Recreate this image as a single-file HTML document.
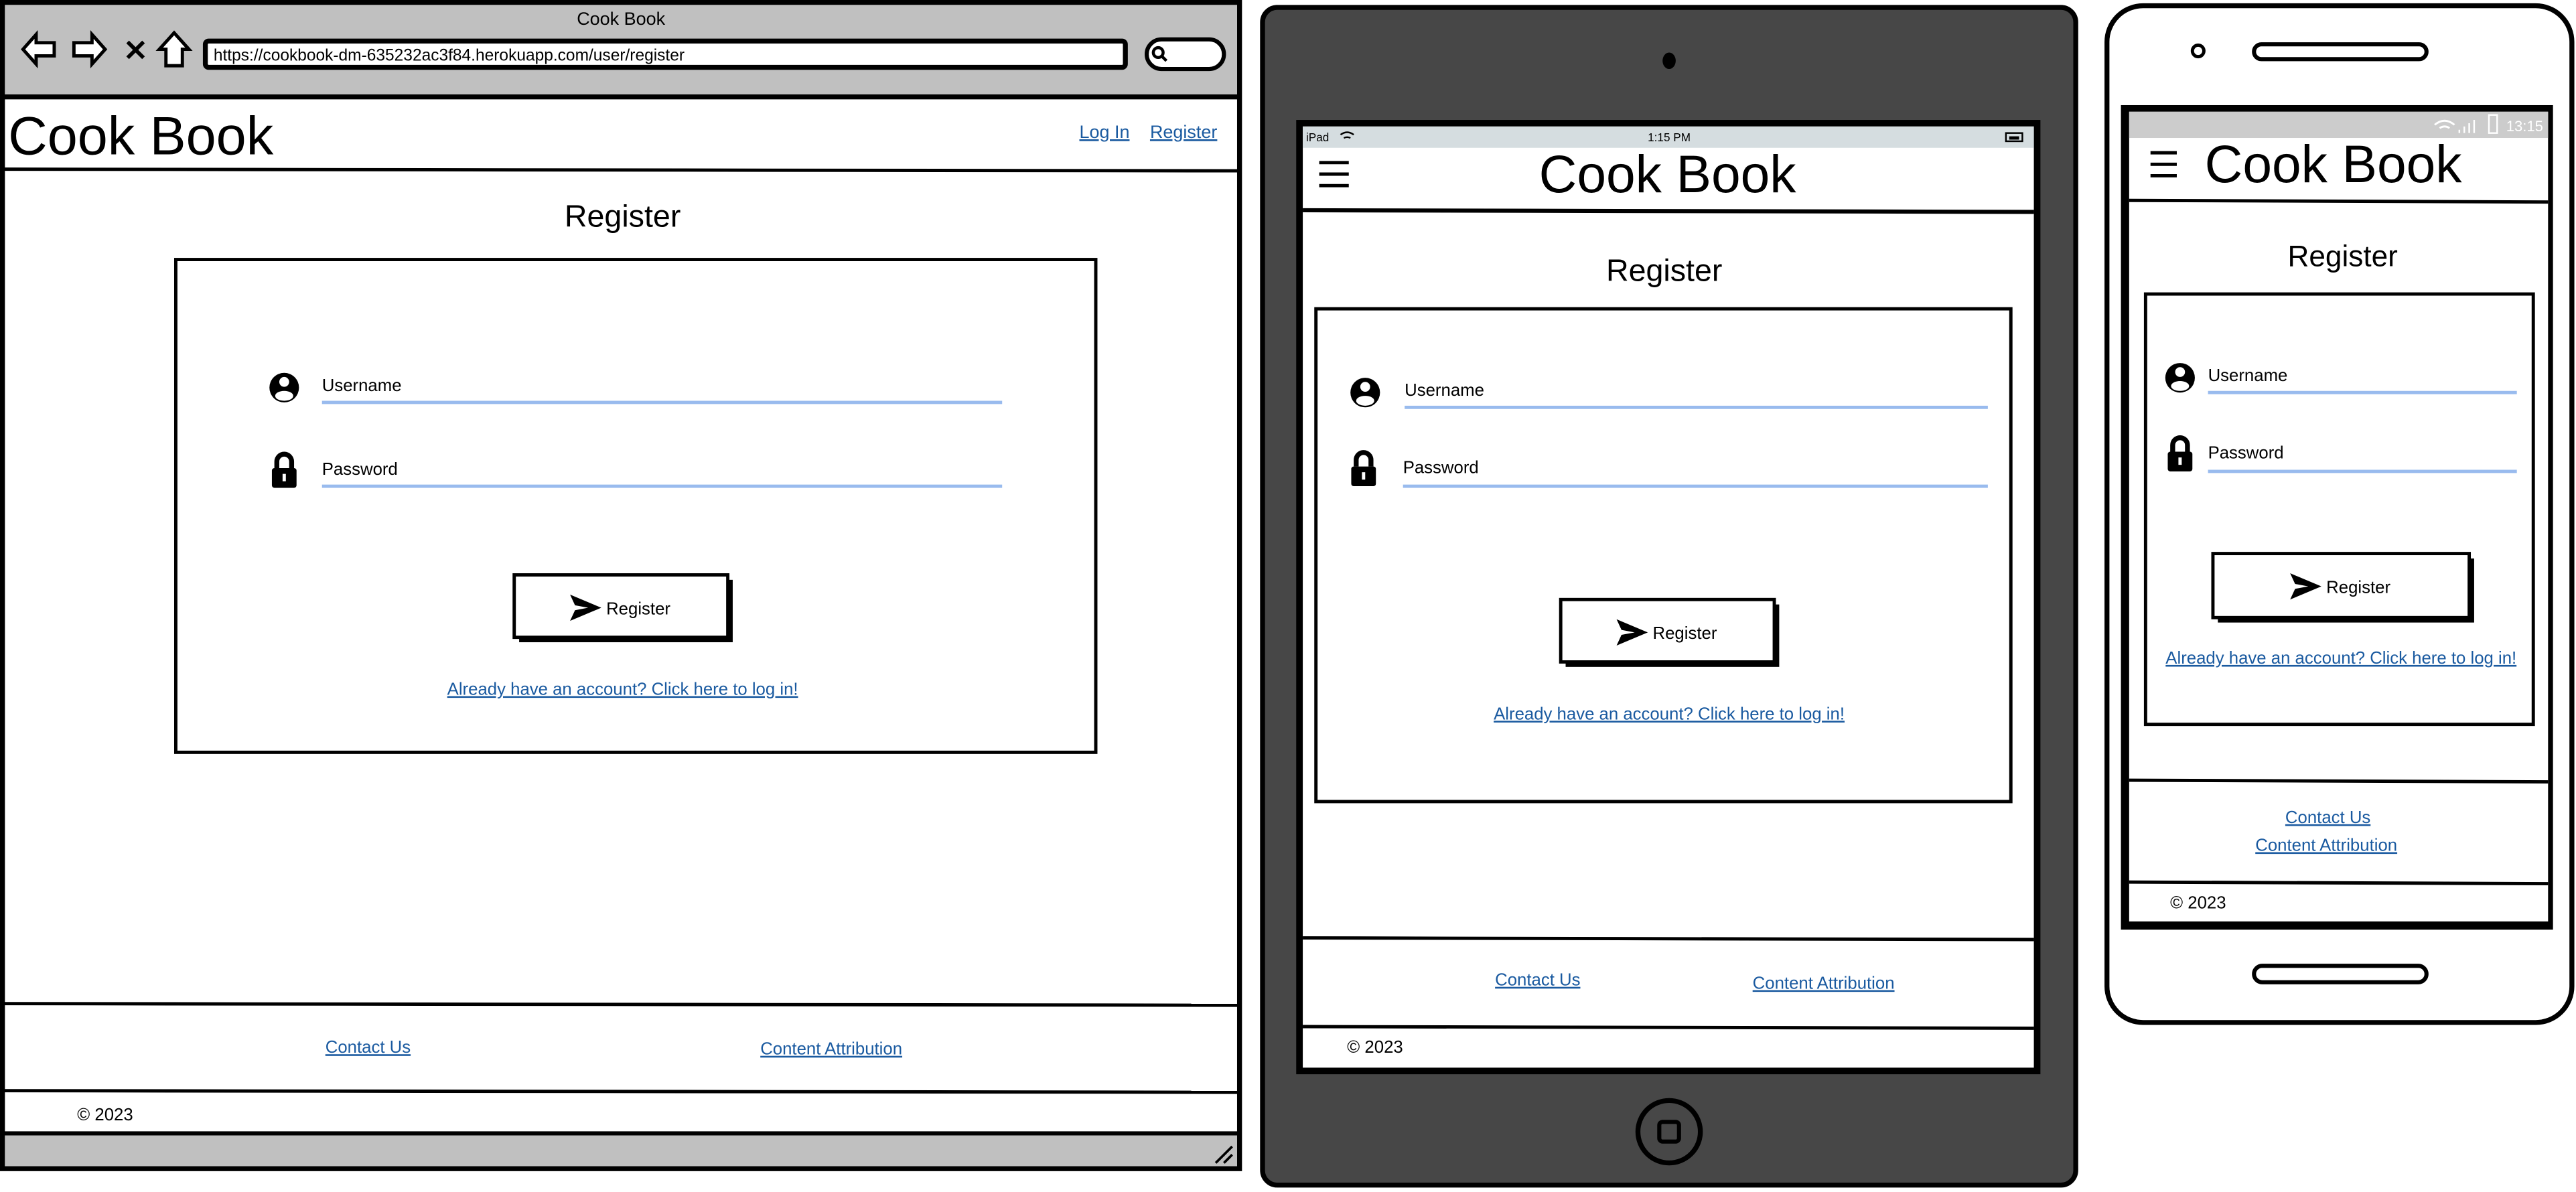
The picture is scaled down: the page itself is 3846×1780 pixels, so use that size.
<!DOCTYPE html>
<html><head><meta charset="utf-8"><style>
html,body{margin:0;padding:0;background:#fff;overflow:hidden}
svg{display:block}
text{font-family:"Liberation Sans",sans-serif}
.lk{fill:#1a5aa0;text-decoration:underline}
</style></head><body>
<svg width="3846" height="1780" viewBox="0 0 1568 725.7" preserveAspectRatio="none" xmlns="http://www.w3.org/2000/svg">
<defs>
<g id="user"><circle r="9" fill="#000"/><circle cy="-3.5" r="3" fill="#fff"/><ellipse cy="5" rx="5.5" ry="3" fill="#fff"/></g>
<g id="lock"><path d="M-4.5,-2 V-6 A4.5,4.5 0 0 1 4.5,-6 V-2" fill="none" stroke="#000" stroke-width="3"/><rect x="-7.5" y="-2" width="15" height="12" rx="1.5" fill="#000"/><rect x="-1" y="1.5" width="2" height="4.5" fill="#fff"/></g>
<g id="send"><path d="M-9,-8 L10,0 L-9,8 L-6,1.5 L2,0 L-6,-1.5 Z" fill="#000"/></g>
</defs>

<!-- ============ BROWSER ============ -->
<rect x="1.5" y="1.5" width="753" height="710" fill="#fff" stroke="#000" stroke-width="3"/>
<rect x="3" y="3" width="750" height="55" fill="#c0c0c0"/>
<line x1="1" y1="59" x2="755" y2="59" stroke="#000" stroke-width="3"/>
<text x="378" y="15" font-size="11" text-anchor="middle">Cook Book</text>
<path d="M14,30 L22,21 V26 H33 V34 H22 V39 Z" fill="#fff" stroke="#000" stroke-width="2"/>
<path d="M64,30 L56,21 V26 H45 V34 H56 V39 Z" fill="#fff" stroke="#000" stroke-width="2"/>
<text x="75" y="37" font-size="18" font-weight="bold" font-family="DejaVu Sans">✕</text>
<path d="M106,20 L97,30 H101 V40 H111 V30 H115 Z" fill="#fff" stroke="#000" stroke-width="2"/>
<rect x="125" y="25" width="560" height="16" rx="2" fill="#fff" stroke="#000" stroke-width="3"/>
<text x="130" y="37" font-size="10">https://cookbook-dm-635232ac3f84.herokuapp.com/user/register</text>
<rect x="698" y="24" width="47" height="18" rx="9" fill="#fff" stroke="#000" stroke-width="2.5"/>
<circle cx="705" cy="32" r="3" fill="none" stroke="#000" stroke-width="1.8"/>
<line x1="707" y1="34" x2="710" y2="37" stroke="#000" stroke-width="1.8"/>
<text x="5" y="94" font-size="33">Cook Book</text>
<text x="657" y="84" font-size="11" class="lk">Log In</text>
<text x="700" y="84" font-size="11" class="lk">Register</text>
<line x1="2" y1="103" x2="755" y2="104" stroke="#000" stroke-width="2"/>
<text x="379" y="138" font-size="19" text-anchor="middle">Register</text>
<rect x="107" y="158" width="560" height="300" fill="#fff" stroke="#000" stroke-width="2"/>
<use href="#user" x="173" y="236"/>
<text x="196" y="238" font-size="10.5">Username</text>
<line x1="196" y1="245" x2="610" y2="245" stroke="#99bbee" stroke-width="2"/>
<use href="#lock" x="173" y="287"/>
<text x="196" y="289" font-size="10.5">Password</text>
<line x1="196" y1="296" x2="610" y2="296" stroke="#99bbee" stroke-width="2"/>
<rect x="316" y="353" width="130" height="38" fill="#000"/>
<rect x="313" y="350" width="130" height="38" fill="#fff" stroke="#000" stroke-width="2"/>
<use href="#send" x="356" y="370"/>
<text x="369" y="374" font-size="10.5">Register</text>
<text x="379" y="423" font-size="10.5" text-anchor="middle" class="lk">Already have an account? Click here to log in!</text>
<line x1="2" y1="611" x2="755" y2="612" stroke="#000" stroke-width="2"/>
<text x="224" y="641" font-size="10.5" text-anchor="middle" class="lk">Contact Us</text>
<text x="506" y="642" font-size="10.5" text-anchor="middle" class="lk">Content Attribution</text>
<line x1="2" y1="664" x2="755" y2="665" stroke="#000" stroke-width="2"/>
<text x="47" y="682" font-size="10.5">© 2023</text>
<rect x="3" y="690" width="750" height="20" fill="#c0c0c0"/>
<line x1="2" y1="690" x2="755" y2="690" stroke="#000" stroke-width="2.5"/>
<path d="M740,708 L750,698 M745,708 L750,703" stroke="#000" stroke-width="1.5"/>

<!-- ============ TABLET ============ -->
<rect x="768.5" y="4.5" width="495" height="717" rx="9" fill="#474747" stroke="#000" stroke-width="3"/>
<ellipse cx="1016" cy="37" rx="4" ry="5" fill="#000"/>
<rect x="789" y="73" width="453" height="581" fill="#000"/>
<rect x="793" y="77" width="445" height="573" fill="#fff"/>
<rect x="793" y="77" width="445" height="13" fill="#d5dde0"/>
<text x="795" y="86" font-size="7">iPad</text>
<path d="M816,82 Q820,79 824,82 M818,84 Q820,83 822,84" stroke="#000" fill="none" stroke-width="1"/>
<text x="1016" y="86" font-size="7" text-anchor="middle">1:15 PM</text>
<rect x="1221" y="81" width="10" height="5" fill="none" stroke="#000" stroke-width="1"/><rect x="1223" y="83" width="6" height="2" fill="#000"/>
<path d="M803,99 H821 M803,106 H821 M803,113 H821" stroke="#000" stroke-width="2"/>
<text x="1015" y="117" font-size="32" text-anchor="middle">Cook Book</text>
<line x1="793" y1="128" x2="1238" y2="129" stroke="#000" stroke-width="2.5"/>
<text x="1013" y="171" font-size="19" text-anchor="middle">Register</text>
<rect x="801" y="188" width="423" height="300" fill="#fff" stroke="#000" stroke-width="2"/>
<use href="#user" x="831" y="239"/>
<text x="855" y="241" font-size="10.5">Username</text>
<line x1="855" y1="248" x2="1210" y2="248" stroke="#99bbee" stroke-width="2"/>
<use href="#lock" x="830" y="286"/>
<text x="854" y="288" font-size="10.5">Password</text>
<line x1="854" y1="296" x2="1210" y2="296" stroke="#99bbee" stroke-width="2"/>
<rect x="953" y="368" width="130" height="38" fill="#000"/>
<rect x="950" y="365" width="130" height="38" fill="#fff" stroke="#000" stroke-width="2"/>
<use href="#send" x="993" y="385"/>
<text x="1006" y="389" font-size="10.5">Register</text>
<text x="1016" y="438" font-size="10.5" text-anchor="middle" class="lk">Already have an account? Click here to log in!</text>
<line x1="793" y1="571" x2="1238" y2="572" stroke="#000" stroke-width="2"/>
<text x="936" y="600" font-size="10.5" text-anchor="middle" class="lk">Contact Us</text>
<text x="1110" y="602" font-size="10.5" text-anchor="middle" class="lk">Content Attribution</text>
<line x1="793" y1="625" x2="1238" y2="626" stroke="#000" stroke-width="2"/>
<text x="820" y="641" font-size="10.5">© 2023</text>
<circle cx="1016" cy="689" r="19" fill="none" stroke="#000" stroke-width="3"/>
<rect x="1010" y="683" width="12" height="12" rx="2" fill="none" stroke="#000" stroke-width="2.5"/>

<!-- ============ PHONE ============ -->
<rect x="1282.5" y="3.5" width="283" height="619" rx="22" fill="#fff" stroke="#000" stroke-width="3"/>
<circle cx="1338" cy="31" r="3.5" fill="none" stroke="#000" stroke-width="2"/>
<rect x="1372" y="27" width="105" height="9" rx="4.5" fill="none" stroke="#000" stroke-width="2.5"/>
<rect x="1291" y="64" width="263" height="502" fill="#000"/>
<rect x="1296" y="68" width="255" height="493" fill="#fff"/>
<rect x="1296" y="68" width="255" height="16" fill="#cccccc"/>
<text x="1548" y="80" font-size="9" text-anchor="end" fill="#fff">13:15</text>
<rect x="1515" y="70" width="5" height="11" fill="none" stroke="#fff" stroke-width="1"/>
<path d="M1497,81 V79 M1500,81 V77 M1503,81 V75 M1506,81 V73" stroke="#fff" stroke-width="1"/>
<path d="M1482,76 Q1488,71 1494,76 M1485,78 Q1488,76 1491,78" stroke="#fff" fill="none" stroke-width="1.2"/>
<path d="M1309,93 H1325 M1309,100 H1325 M1309,107 H1325" stroke="#000" stroke-width="2"/>
<text x="1342" y="111" font-size="32">Cook Book</text>
<line x1="1296" y1="122" x2="1551" y2="123" stroke="#000" stroke-width="2"/>
<text x="1426" y="162" font-size="18" text-anchor="middle">Register</text>
<rect x="1306" y="179" width="236" height="262" fill="#fff" stroke="#000" stroke-width="2"/>
<use href="#user" x="1327" y="230"/>
<text x="1344" y="232" font-size="10.5">Username</text>
<line x1="1344" y1="239" x2="1532" y2="239" stroke="#99bbee" stroke-width="2"/>
<use href="#lock" x="1327" y="277"/>
<text x="1344" y="279" font-size="10.5">Password</text>
<line x1="1344" y1="287" x2="1532" y2="287" stroke="#99bbee" stroke-width="2"/>
<rect x="1350" y="340" width="156" height="39" fill="#000"/>
<rect x="1347" y="337" width="156" height="39" fill="#fff" stroke="#000" stroke-width="2"/>
<use href="#send" x="1403" y="357"/>
<text x="1416" y="361" font-size="10.5">Register</text>
<text x="1425" y="404" font-size="10.5" text-anchor="middle" class="lk">Already have an account? Click here to log in!</text>
<line x1="1296" y1="475" x2="1551" y2="476" stroke="#000" stroke-width="2"/>
<text x="1417" y="501" font-size="10.5" text-anchor="middle" class="lk">Contact Us</text>
<text x="1416" y="518" font-size="10.5" text-anchor="middle" class="lk">Content Attribution</text>
<line x1="1296" y1="537" x2="1551" y2="538" stroke="#000" stroke-width="2"/>
<text x="1321" y="553" font-size="10.5">© 2023</text>
<rect x="1372" y="588" width="105" height="10" rx="5" fill="none" stroke="#000" stroke-width="2.5"/>
</svg>
</body></html>
